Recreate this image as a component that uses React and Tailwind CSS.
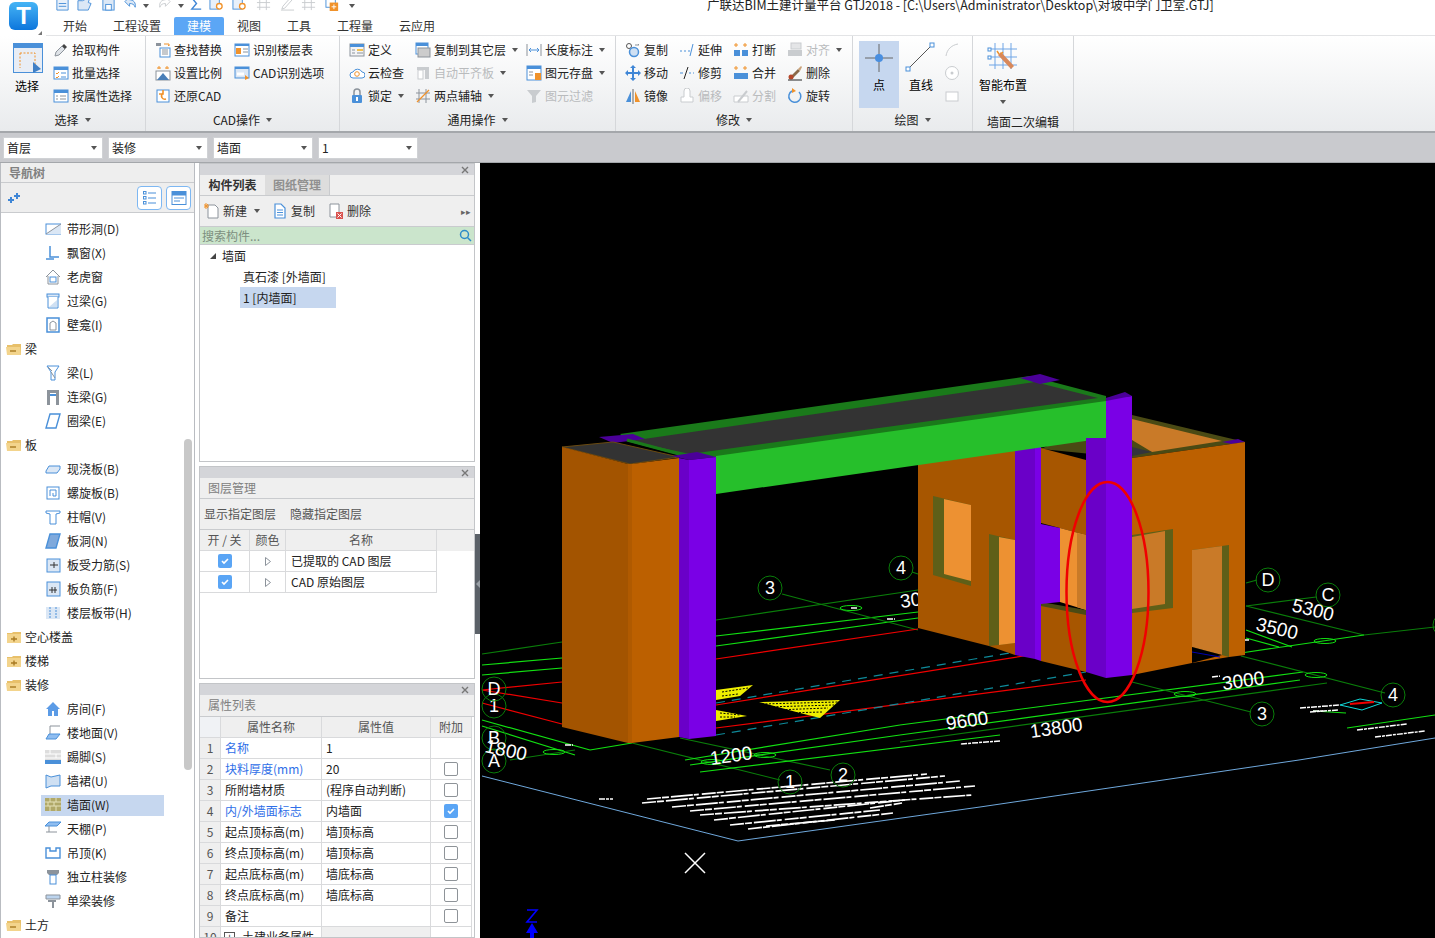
import React from 'react';

const blue = '#4a90d9';
const gray = '#8c939b';
const orange = '#f0922b';
const off = '#c9cccf';

// 16x16 drawings for ribbon and tree entries
const icons = {
  pick: <><path d="M2 14l1-4 6-6 3 3-6 6z" fill="#dfe3e8" stroke={gray} /><path d="M9 4l2-2 3 3-2 2z" fill="#444" /></>,
  batch: <><rect x="1" y="2" width="14" height="12" fill="#fff" stroke={blue} /><rect x="1" y="2" width="14" height="3" fill={blue} /><path d="M3 8l1 1 2-2M3 12l1 1 2-2" stroke={orange} fill="none" /><path d="M8 8h5M8 12h5" stroke={blue} /></>,
  attr: <><rect x="1" y="2" width="14" height="12" fill="#fff" stroke={blue} /><rect x="1" y="2" width="14" height="3" fill={blue} /><path d="M3 8h2M3 11h2M7 8h6M7 11h6" stroke={gray} /></>,
  find: <><rect x="1" y="1" width="5" height="3" fill={gray} /><path d="M9 2h5v2M14 4l-1-1" stroke={orange} fill="none" /><rect x="5" y="6" width="10" height="9" fill="#fff" stroke={blue} /><path d="M7 8h6M7 10h6M7 12h6" stroke={gray} /></>,
  scale: <><path d="M4 1v3M2 3h4M12 1v3M10 3h4" stroke={orange} /><rect x="1" y="6" width="14" height="9" fill="#fff" stroke={gray} /><path d="M2 15l6-7 6 7z" fill="#4a7fb8" /></>,
  restore: <><rect x="2" y="2" width="12" height="12" fill="#fff" stroke={blue} /><path d="M11 11c-4 1-6-3-3-6M8 2v4H4" stroke={orange} strokeWidth="1.6" fill="none" /></>,
  floor: <><rect x="1" y="2" width="14" height="12" fill="#fff" stroke={blue} /><rect x="1" y="2" width="14" height="2" fill={blue} /><rect x="2" y="6" width="5" height="6" fill={orange} /><path d="M9 7h5M9 10h5" stroke={gray} /></>,
  cadopt: <><rect x="1" y="2" width="14" height="11" fill="#dbe7f5" stroke={blue} /><rect x="1" y="2" width="14" height="2" fill={blue} /><path d="M3 9h7" stroke="#fff" strokeWidth="3" /><path d="M11 10l4 3-4 2z" fill={orange} /></>,
  def: <><rect x="1" y="2" width="14" height="12" fill="#f3f4f6" stroke={gray} /><rect x="1" y="2" width="14" height="3" fill={blue} /><rect x="8" y="7" width="6" height="2" fill="#f3c04c" /><path d="M3 8h3M3 11h3M8 11h6" stroke={gray} /></>,
  cloud: <><path d="M4 13a3 3 0 0 1 0-6 5 5 0 0 1 9 0 3 3 0 0 1 0 6z" fill="#fff" stroke={blue} /><circle cx="8" cy="9" r="2.3" fill="none" stroke={orange} /></>,
  lock: <><rect x="3" y="7" width="10" height="8" rx="1" fill={blue} /><path d="M5 7V4a3 3 0 0 1 6 0v3" fill="none" stroke={gray} strokeWidth="1.5" /><rect x="7" y="9" width="2" height="4" fill="#fff" /></>,
  copyfloor: <><rect x="1" y="1" width="12" height="11" fill="#fff" stroke={blue} /><rect x="1" y="1" width="12" height="3" fill={blue} /><rect x="3" y="6" width="12" height="9" fill="#ccc" stroke={gray} /></>,
  align: <><rect x="2" y="2" width="12" height="3" fill={off} /><rect x="3" y="5" width="5" height="9" fill="#fff" stroke={off} /><rect x="10" y="5" width="4" height="9" fill={off} /></>,
  axis: <><path d="M4 1v14M11 1v14M1 5h14M1 11h14" stroke={gray} /><path d="M2 14L14 2" stroke={orange} strokeWidth="1.3" /></>,
  dim: <><path d="M1 2v12M15 2v12" stroke={gray} /><path d="M3 8h10M3 8l2-2M3 8l2 2M13 8l-2-2M13 8l-2 2" stroke={blue} fill="none" /></>,
  store: <><rect x="1" y="1" width="14" height="14" fill="#fff" stroke={blue} /><rect x="1" y="1" width="14" height="3" fill={blue} /><path d="M3 7h4M3 10h4" stroke={gray} /><rect x="9" y="8" width="6" height="7" fill={orange} /></>,
  filter: <path d="M1 2h14l-5 6v6l-4 1V8z" fill={off} />,
  copy: <><circle cx="4" cy="4" r="2.5" fill="#fff" stroke="#555" /><circle cx="9" cy="10" r="4.5" fill="#cfe0f3" stroke={blue} strokeWidth="1.5" /><path d="M10 3h4l-1-1" stroke={gray} fill="none" /></>,
  extend: <><path d="M1 9h2M5 9h2M9 9h2" stroke={blue} /><path d="M14 2l-3 12" stroke={blue} /></>,
  breakit: <><path d="M3 1v4M1 3h4M12 1v4M10 3h4" stroke={orange} /><rect x="1" y="8" width="6" height="6" fill={blue} /><rect x="9" y="8" width="6" height="6" fill={blue} /></>,
  alignit: <><rect x="4" y="1" width="10" height="6" fill="#e4e5e7" stroke={off} /><rect x="1" y="8" width="14" height="6" fill={off} /></>,
  move: <path d="M8 0l3 3H9v4h4V5l3 3-3 3V9H9v4h2l-3 3-3-3h2V9H3v2L0 8l3-3v2h4V3H5z" fill="#3f86d6" />,
  trim: <><path d="M1 8h3M10 8h2M14 8h1" stroke={blue} /><path d="M9 2L5 14" stroke="#222" /></>,
  merge: <><path d="M3 1v4M1 3h4M12 1v4M10 3h4" stroke={orange} /><rect x="1" y="8" width="14" height="6" fill={blue} /></>,
  del: <><path d="M3 12l8-8 2 2-8 8z" fill="#8a6a4a" /><path d="M11 4l3-3 1 1-2 4z" fill="#c9a27a" /><circle cx="4" cy="12" r="2.5" fill="#b5472a" /><path d="M1 15h14" stroke="#222" /></>,
  mirror: <><path d="M1 14L6 3v11z" fill={blue} /><path d="M10 3l5 11h-5z" fill={orange} /><path d="M8 1v15" stroke="#666" /></>,
  offset: <path d="M2 14V9h3V3a3 3 0 0 1 6 0v6h3v5z" fill="#fff" stroke={off} />,
  split: <><path d="M1 8h14v6H1z" fill="#fff" stroke={off} /><path d="M5 14L14 3" stroke={off} strokeWidth="2" /></>,
  rotate: <><path d="M12 4a6 6 0 1 1-7-1" fill="none" stroke={blue} strokeWidth="1.5" /><path d="M5 0l4 3-4 2z" fill={orange} /></>,
  arc: <path d="M2 14C3 7 8 3 14 2" fill="none" stroke={off} />,
  ring: <><circle cx="8" cy="8" r="6.5" fill="#fff" stroke={off} /><circle cx="8" cy="8" r="1.5" fill={off} /></>,
  rect: <rect x="2" y="4" width="12" height="9" fill="#fff" stroke={off} />,
  strip: <><rect x="1" y="3" width="15" height="10" fill="#fff" stroke={blue} /><path d="M1 13h15V3z" fill="#dbe7f5" /><path d="M1 13L16 3" stroke={gray} /></>,
  bay: <path d="M5 1v11h9M1 14h8" fill="none" stroke={blue} strokeWidth="1.5" />,
  dormer: <><path d="M1 8l7-7 7 7M3 7v8h10V7" fill="none" stroke={gray} /><rect x="5" y="8" width="6" height="5" fill="#fff" stroke={blue} /></>,
  lintel: <><rect x="2" y="1" width="12" height="3" fill="#dbe7f5" stroke={blue} /><path d="M3 4v11h10V4" fill="#fff" stroke={blue} /><path d="M4 14l8-7v7z" fill="#cfe0f3" /></>,
  niche: <><rect x="2" y="1" width="12" height="14" fill="#fff" stroke={blue} strokeWidth="1.5" /><path d="M5 13V6l3-2 3 2v7z" fill="#fff" stroke={gray} /></>,
  beam: <><path d="M2 1h12l-4 6v8H6V7z" fill="#fff" stroke={blue} /><path d="M6 7l4 6M3 2l4 4" stroke={gray} /></>,
  link: <><rect x="2" y="1" width="12" height="3" fill={gray} /><rect x="2" y="4" width="3" height="12" fill={gray} /><rect x="11" y="4" width="3" height="12" fill={gray} /><rect x="5" y="5" width="6" height="2" fill={blue} /></>,
  ringbeam: <path d="M5 1h10l-4 14H1z" fill="#fff" stroke={blue} strokeWidth="1.4" />,
  slab: <path d="M1 10l3-5h11v3l-3 4H1z" fill="#dbe7f5" stroke={blue} />,
  spiral: <><rect x="2" y="2" width="12" height="12" fill="#fff" stroke={blue} /><path d="M5 11V5h6v6H8V8" fill="none" stroke={blue} /></>,
  cap: <path d="M1 2h14v2l-4 1v10H5V5L1 4z" fill="#fff" stroke={blue} />,
  hole: <path d="M5 1h10l-4 14H1z" fill="#7fa9dc" stroke={blue} strokeWidth="1.4" />,
  rebar: <><rect x="2" y="2" width="13" height="13" fill="#dbe7f5" stroke={blue} /><path d="M5 8h8M9 5v6" stroke="#333" /></>,
  neg: <><rect x="2" y="1" width="13" height="14" fill="#dbe7f5" stroke={blue} /><path d="M4 9h8M7 6v6M10 6v6" stroke="#333" /></>,
  band: <><rect x="1" y="2" width="14" height="12" fill="#dbe7f5" /><path d="M5 2v12M11 2v12" stroke={blue} strokeDasharray="2 1" /></>,
  room: <path d="M8 1l7 7h-2v7H9v-5H7v5H3V8H1z" fill="#5b9be6" />,
  ground: <><path d="M5 1h10M5 1v8" stroke={gray} fill="none" /><path d="M4 9h11l-4 5H1z" fill="#8fbdf0" stroke={blue} /></>,
  kick: <><rect x="0" y="1" width="16" height="14" fill="#ddd" /><path d="M0 5h16M0 9h16M5 1v4M11 5v4" stroke="#fff" /><rect x="0" y="11" width="16" height="4" fill={blue} /></>,
  skirt: <path d="M1 2l5 2 9-2v11H6l-5 2z" fill="#cfe0f3" stroke={blue} />,
  wall: <><rect x="0" y="1" width="16" height="13" fill="#b0a868" /><path d="M0 5h16M0 9h16M5 1v4M11 1v4M3 5v4M9 5v4M5 9v5M11 9v5" stroke="#e5e1b8" /></>,
  ceiling: <><path d="M4 1h12l-4 4H0z" fill="#8fbdf0" stroke={blue} /><path d="M4 5v6H1M4 11l8 0" stroke={gray} fill="none" /></>,
  hang: <path d="M1 3h4v3h6V3h4v10H1z" fill="#fff" stroke={blue} strokeWidth="1.4" />,
  column: <><path d="M2 1h12v3l-2 2H4L2 4z" fill={gray} /><rect x="5" y="6" width="6" height="9" fill="#fff" stroke={blue} /></>,
  beamdeco: <><path d="M1 2h14v4H1z" fill="#bcd4ee" stroke={gray} /><path d="M3 8h8" stroke={gray} strokeWidth="2" /><rect x="7" y="9" width="2" height="6" fill={gray} /></>,
  newdoc: <><path d="M4 2h7l3 3v10H4z" fill="#fff" stroke={gray} /><path d="M2 0v6M0 3h5M0.5 1l3.5 4M4 1L.5 5" stroke={orange} /></>,
  copydoc: <><path d="M3 1h6l4 4v10H3z" fill="#fff" stroke={blue} strokeWidth="1.2" /><path d="M5 7h6M5 9.5h6M5 12h6" stroke={blue} /></>,
  deldoc: <><path d="M2 1h9v13H2z" fill="#fff" stroke={gray} /><rect x="8" y="9" width="7" height="7" fill="#d9534f" /><path d="M9.5 10.5l4 4M13.5 10.5l-4 4" stroke="#fff" /></>,
  listbtn: <><path d="M6 3h8M6 8h8M6 13h8" stroke={blue} strokeWidth="1.2" /><rect x="1.5" y="1.5" width="2.5" height="2.5" fill="none" stroke={blue} /><rect x="1.5" y="6.5" width="2.5" height="2.5" fill="none" stroke={blue} /><rect x="1.5" y="11.5" width="2.5" height="2.5" fill="none" stroke={blue} /></>,
  winbtn: <><rect x="1" y="1.5" width="14" height="13" fill="#fff" stroke={blue} /><rect x="1" y="1.5" width="14" height="4" fill={blue} /><path d="M3 8h10M3 11h6" stroke={blue} /></>,
  qdoc: <><path d="M2 0h9l3 3v12H2z" fill="#e8f0fa" stroke={blue} /><path d="M4 8h8M4 11h8" stroke={blue} /></>,
  qopen: <path d="M1 15V5h5l8-4-2 6 3 1-3 7z" fill="#dce8f6" stroke={blue} />,
  qsave: <><rect x="2" y="0" width="12" height="15" fill="#dce8f6" stroke={blue} /><rect x="5" y="9" width="6" height="6" fill="#fff" stroke={blue} /></>,
  qundo: <path d="M2 6l5 5V8c3 0 5 1 6 4 1-5-2-8-6-8V1z" fill="#dce8f6" stroke={blue} />,
  qredo: <path d="M14 6l-5 5V8c-3 0-5 1-6 4-1-5 2-8 6-8V1z" fill="#fff" stroke={off} />,
  qsum: <path d="M13 2H3l5 6-5 6h10" fill="none" stroke="#3f86d6" strokeWidth="1.5" />,
  qfind: <><rect x="1" y="0" width="10" height="14" fill="#e8f0fa" stroke={blue} /><circle cx="11" cy="11" r="3" fill="#fff" stroke={orange} strokeWidth="1.4" /></>,
  qgrid: <path d="M1 2h14M1 7h14M1 12h14M4 0v15M11 0v15" stroke={off} />,
  qpen: <path d="M2 14l3-1 8-9-2-2-8 9zM1 15h14" fill="#fff" stroke={off} />,
  qplus: <><rect x="1" y="0" width="10" height="12" fill="#fff" stroke={blue} /><rect x="5" y="7" width="9" height="9" fill={orange} /><path d="M9.5 9v5M7 11.5h5" stroke="#fff" /></>,
};

const Ico = ({ name, size = 16 }) => (
  <svg width={size} height={size} viewBox="0 0 16 16" className="shrink-0">{icons[name]}</svg>
);

const Caret = ({ cls = '' }) => (
  <span className={`inline-block w-0 h-0 border-x-[3.5px] border-x-transparent border-t-[4px] border-t-[#555] ${cls}`} />
);

const Tool = ({ icon, label, w, disabled, caret }) => (
  <div className="h-[23px] flex items-center gap-[3px]" style={{ width: w }}>
    <Ico name={icon} />
    <span className={`whitespace-nowrap ${disabled ? 'text-[#b9bbbd]' : 'text-[#222]'}`}>{label}</span>
    {caret && <Caret cls="ml-[3px]" />}
  </div>
);

const Col = ({ ml, children }) => (
  <div className="flex flex-col" style={{ marginLeft: ml }}>{children}</div>
);

const Group = ({ w, label, caret = true, children }) => (
  <div className="h-full flex flex-col border-r border-[#d5d7da] shrink-0" style={{ width: w }}>
    <div className="h-[71px] mt-[2px] flex">{children}</div>
    <div className={`flex-1 flex items-center justify-center gap-[6px] text-[#222] ${caret ? 'pb-[1px]' : 'pt-[3px]'}`}>
      {label}{caret && <Caret />}
    </div>
  </div>
);

const Select = ({ value }) => (
  <div className="w-[100px] h-[22px] bg-white border border-[#d0d2d5] flex items-center justify-between pl-[3px] pr-[5px] text-[#222]">
    {value}<Caret />
  </div>
);

// quick access bar: [icon, left margin]; the window edge cuts their tops off
const quick = [
  ['qdoc', 0], ['qopen', 7], ['qsave', 9], ['qundo', 7], ['caret', 5], ['qredo', 8], ['caret', 6], ['qsum', 5],
  ['qfind', 5], ['qfind', 8], ['qgrid', 9], ['qpen', 9], ['qgrid', 6], ['qplus', 9], ['caret', 9],
];

const treeRows = [
  ['strip', '带形洞(D)'], ['bay', '飘窗(X)'], ['dormer', '老虎窗'], ['lintel', '过梁(G)'], ['niche', '壁龛(I)'],
  ['-', '梁'], ['beam', '梁(L)'], ['link', '连梁(G)'], ['ringbeam', '圈梁(E)'],
  ['-', '板'], ['slab', '现浇板(B)'], ['spiral', '螺旋板(B)'], ['cap', '柱帽(V)'], ['hole', '板洞(N)'],
  ['rebar', '板受力筋(S)'], ['neg', '板负筋(F)'], ['band', '楼层板带(H)'],
  ['+', '空心楼盖'], ['+', '楼梯'], ['-', '装修'],
  ['room', '房间(F)'], ['ground', '楼地面(V)'], ['kick', '踢脚(S)'], ['skirt', '墙裙(U)'], ['wall', '墙面(W)'],
  ['ceiling', '天棚(P)'], ['hang', '吊顶(K)'], ['column', '独立柱装修'], ['beamdeco', '单梁装修'], ['-', '土方'],
];

const Folder = ({ open }) => (
  <svg width="16" height="13" viewBox="0 0 16 13" className="shrink-0">
    <path d="M1 2h5l1-1h8v11H1z" fill="#e8c06a" />
    <path d={open ? 'M0 4h14l1 8H1z' : 'M1 3h14v9H1z'} fill="#f3d48c" />
    <path d={open ? 'M4 8h6' : 'M5 8h6M8 5.5v5'} stroke="#a87a22" strokeWidth="1.4" />
  </svg>
);

const Check = ({ on }) => (
  on ? (
    <span className="w-[14px] h-[14px] rounded-[2px] bg-[#5aa5f5] flex items-center justify-center">
      <svg width="10" height="10" viewBox="0 0 10 10"><path d="M2 5l2 2 4-4" stroke="#fff" strokeWidth="1.6" fill="none" /></svg>
    </span>
  ) : (
    <span className="w-[14px] h-[14px] rounded-[2px] bg-white border border-[#8e9398]" />
  )
);

const Close = () => (
  <div className="h-[11px] bg-[#d4d5d9] flex items-center justify-end pr-[5px] shrink-0">
    <svg width="8" height="8" viewBox="0 0 8 8"><path d="M1 1l6 6M7 1L1 7" stroke="#777" strokeWidth="1.4" /></svg>
  </div>
);

const PanelHead = ({ label, cls }) => (
  <div className={`bg-[#efefef] border-b border-[#c9cbce] flex items-center pl-[8px] pb-[1px] text-[#808080] shrink-0 ${cls}`}>{label}</div>
);

const propRows = [
  ['名称', '1', true, null],
  ['块料厚度(mm)', '20', true, false],
  ['所附墙材质', '(程序自动判断)', false, false],
  ['内/外墙面标志', '内墙面', true, true],
  ['起点顶标高(m)', '墙顶标高', false, false],
  ['终点顶标高(m)', '墙顶标高', false, false],
  ['起点底标高(m)', '墙底标高', false, false],
  ['终点底标高(m)', '墙底标高', false, false],
  ['备注', '', false, false],
];

const Cell = ({ cls = '', children }) => (
  <div className={`h-[21px] border-r border-b border-[#d9dadc] flex items-center ${cls}`}>{children}</div>
);

// dashes that read as small CAD annotation text
const noise = [
  [647, 799, 927, 774], [642, 803, 945, 776], [672, 807, 960, 781], [690, 811, 975, 786], [700, 815, 972, 795],
  [714, 820, 905, 800], [730, 825, 880, 810], [748, 829, 893, 813], [766, 826, 835, 820], [870, 808, 902, 803],
];

const gridCircle = [
  [770, 588, '3'], [901, 568, '4'], [1268, 580, 'D'], [1328, 595, 'C'], [1393, 695, '4'], [1262, 714, '3'],
  [843, 775, '2'], [790, 782, '1'], [494, 761, 'A'], [494, 738, 'B'], [494, 706, '1'], [494, 689, 'D'], [1445, 625, ''],
];

const dims = [
  ['30', 901, 608, -8], ['5300', 1291, 611, 14], ['3500', 1255, 630, 13], ['3000', 1223, 690, -8],
  ['9600', 947, 730, -8], ['13800', 1031, 738, -8], ['1200', 711, 765, -8], ['1800', 484, 752, 12],
];

const green = [
  [482, 654, 562, 642, 1], [716, 620, 918, 590, 1], [482, 665, 562, 658, 0], [482, 675, 562, 668, 0],
  [716, 636, 918, 612, 0], [716, 646, 918, 618, 0], [900, 725, 1303, 672, 0], [900, 735, 1300, 680, 0],
  [900, 742, 1327, 683, 1], [1246, 583, 1257, 580, 1], [1246, 606, 1316, 597, 1], [1246, 606, 1364, 635, 1],
  [1364, 635, 1435, 627, 1], [1246, 630, 1292, 647, 0], [1246, 638, 1279, 647, 0], [1241, 653, 1364, 635, 0],
  [1241, 656, 1385, 693, 1], [1132, 682, 1251, 712, 1], [782, 594, 918, 630, 1], [912, 572, 918, 574, 1],
  [482, 720, 590, 750, 0], [482, 726, 575, 755, 0], [590, 750, 632, 743, 0], [510, 760, 575, 750, 1],
  [632, 743, 780, 780, 1], [680, 738, 830, 770, 1], [700, 772, 1000, 735, 0], [685, 760, 900, 725, 0], [690, 765, 900, 735, 0],
  [1347, 728, 1435, 715, 0], [1313, 711, 1346, 713, 0],
];

const CadView = () => (
  <svg viewBox="480 163 955 775" className="w-full h-full block bg-black">
    {green.map(([a, b, c, d, dark], i) => (
      <line key={i} x1={a} y1={b} x2={c} y2={d} stroke={dark ? '#0a7d0a' : '#12e012'} strokeWidth="1.2" />
    ))}
    <path d="M482 690L562 682M716 659L918 629M482 690L562 703M482 703L562 724M716 705L1086 646M716 728L1086 680" stroke="#f00000" strokeWidth="1.2" fill="none" />
    <path d="M716 703L1086 640M716 735L1086 672" stroke="#0e8a9a" strokeWidth="1.2" strokeDasharray="9 7" fill="none" />
    <path d="M482 776L738 841L980 807L1299 760L1435 738" stroke="#6fa8dc" fill="none" />
    <path d="M716 690l37-5-13 11-24 4zM716 710l31 6-31 5zM759 702l81-2-20 18-20-5z" fill="#eeee00" />
    <path d="M762 704L838 702M766 707L834 705M775 710L828 708M785 713L822 712M722 692L748 688M722 696L738 694M720 713L740 715M720 717L735 717" stroke="#000" strokeDasharray="2 1.5" />
    {noise.map(([a, b, c, d], i) => (
      <line key={i} x1={a} y1={b} x2={c} y2={d} stroke="#fff" strokeWidth="1.7" strokeDasharray="14 1 7 2 22 1 5 3" />
    ))}
    <path d="M599 799h14M1300 708l40-3M1310 712l28-2M1357 730l50-6M1375 737l50-6M1313 711h10M851 608h6M887 619h8M565 745h8M1212 677l8-1M1243 640h7M1000 741l-40 3" stroke="#fff" strokeWidth="1.5" strokeDasharray="6 1 3 1" />
    <path d="M1340 705l20-6 22 4-20 7z" fill="none" stroke="#12d8d8" />
    <path d="M1350 704l24-2" stroke="#f00000" strokeWidth="2" />
    {[[851, 608], [1325, 641], [1316, 675], [1185, 694], [554, 752], [765, 755], [712, 762]].map(([x, y], i) => (
      <ellipse key={i} cx={x} cy={y} rx="11" ry="2.5" fill="none" stroke="#12e012" />
    ))}
    {gridCircle.map(([x, y, t], i) => (
      <g key={i}>
        <circle cx={x} cy={y} r="12" fill="none" stroke="#0a7d0a" />
        <text x={x} y={y + 6} textAnchor="middle" fontSize="18" fill="#fff" fontFamily="Liberation Sans, sans-serif">{t}</text>
      </g>
    ))}
    {dims.map(([t, x, y, r], i) => (
      <text key={i} x={x} y={y} fontSize="19" fill="#fff" fontFamily="Liberation Sans, sans-serif" transform={`rotate(${r} ${x} ${y})`}>{t}</text>
    ))}
    <path d="M685 853l20 20M705 853l-20 20" stroke="#fff" strokeWidth="1.5" />
    <path d="M527 910h10l-10 12h10" stroke="#0000ff" strokeWidth="1.6" fill="none" />
    <path d="M532 923l6 10h-4v5h-4v-5h-4z" fill="#0000ff" />

    {/* back building */}
    <polygon points="918,460 1015,445 1015,655 989,646 918,628" fill="#a75600" />
    <polygon points="933,496 971,505 971,586 933,575" fill="#5f5f18" />
    <polygon points="944,499 971,505 971,581 944,574" fill="#ed9132" />
    <polygon points="989,534 1015,540 1015,643 989,646" fill="#5f5f18" />
    <polygon points="999,537 1015,540 1015,643 999,645" fill="#ed9132" />
    <polygon points="1132,415 1245,442 1132,458 1041,449 1060,440" fill="#4a4a14" />
    <polygon points="1132,419 1222,441 1152,452 1132,440" fill="#c97a28" />
    <polygon points="1132,447 1152,452 1132,456" fill="#33343c" />
    <polygon points="1222,442 1238,439 1245,442 1232,444" fill="#4b0099" />
    <polygon points="1041,448 1086,460 1086,535 1041,523" fill="#a75600" />
    <polygon points="1060,528 1086,535 1086,610 1060,602" fill="#ed9132" />
    <polygon points="1077,533 1086,535 1086,610 1077,607" fill="#c97a28" />
    <polygon points="1041,604 1086,613 1086,672 1041,661" fill="#a75600" />
    <polygon points="1041,602 1086,610 1086,615 1041,606" fill="#4a4a14" />
    <polygon points="1041,524 1060,528 1060,602 1041,604" fill="#7a00e6" />
    <polygon points="1132,458 1245,442 1245,655 1229,657 1192,663 1132,675" fill="#bc6000" />
    <polygon points="1132,535 1173,529 1173,608 1132,613" fill="#5f5f18" />
    <polygon points="1132,537 1165,531 1165,604 1132,609" fill="#c97a28" />
    <polygon points="1192,550 1229,545 1229,657 1192,647" fill="#5f5f18" />
    <polygon points="1192,550 1222,546 1222,655 1192,647" fill="#c97a28" />
    <polygon points="1192,647 1222,655 1192,663" fill="#000" />
    <line x1="1192" y1="652" x2="1220" y2="657" stroke="#0000b0" />
    {/* mid column */}
    <polygon points="1015,445 1035,445 1035,659 1015,655" fill="#6a00c8" />
    <polygon points="1035,445 1041,445 1041,661 1035,659" fill="#7a00e6" />
    {/* beam */}
    <polygon points="620,434 1030,376 1106,396 1106,403 716,457 690,458 630,442" fill="#1a7a1a" />
    <polygon points="630,441 1035,382 1098,398 690,454" fill="#333333" />
    <polygon points="716,456 1106,401 1106,438 716,494" fill="#26bf2b" />
    <polygon points="1020,378 1040,374 1060,380 1040,384" fill="#4b0099" />
    {/* near column */}
    <polygon points="1086,438 1106,438 1106,678 1086,672" fill="#6a00c8" />
    <polygon points="1106,398 1132,396 1132,675 1106,678" fill="#7a00e6" />
    <polygon points="1106,398 1125,392 1132,396 1106,401" fill="#4b0099" />
    {/* left block */}
    <polygon points="599,437 633,434 645,439 613,443" fill="#4b0099" />
    <polygon points="562,447 613,442 679,457 630,464" fill="#333333" stroke="#6a4a10" />
    <line x1="627" y1="440" x2="683" y2="455" stroke="#1a7a1a" strokeWidth="3" />
    <polygon points="562,447 628,464 628,743 562,727" fill="#a35400" />
    <polygon points="628,464 632,464 632,743 628,743" fill="#b05a00" />
    <polygon points="632,464 679,458 679,737 632,743" fill="#bc6000" />
    {/* left column */}
    <polygon points="672,456 697,452 716,457 689,460" fill="#4b0099" />
    <polygon points="679,458 689,460 689,739 679,737" fill="#6a00c8" />
    <polygon points="689,460 716,457 716,736 689,739" fill="#7a00e6" />
    <ellipse cx="1107.5" cy="592" rx="41" ry="110" fill="none" stroke="#f00000" strokeWidth="2.5" />
  </svg>
);

export default function App() {
  return (
    <div className="w-[1435px] h-[938px] overflow-hidden bg-white flex flex-col text-[12px] leading-none font-['Noto_Sans_CJK_SC','Noto_Sans',sans-serif]">
      {/* Title area */}
      <div className="h-[36px] flex shrink-0">
        <div className="w-[46px] pl-[9px] pt-[2px] shrink-0 flex items-start">
          <div className="w-[29px] h-[28px] rounded-[6px] bg-gradient-to-b from-[#45b4f5] to-[#0b76dc] flex items-center justify-center text-white text-[24px] font-bold font-['Liberation_Sans',sans-serif]">T</div>
          <svg width="4" height="4" viewBox="0 0 4 4" className="mt-[29px]"><path d="M4 0v4H0z" fill="#777" /></svg>
        </div>
        <div className="flex-1 flex flex-col">
          <div className="h-[17px] flex overflow-hidden shrink-0">
            <div className="w-[661px] h-[11px] overflow-hidden flex items-end pl-[9px] shrink-0">
              {quick.map(([n, ml], i) => (
                <span key={i} className="flex items-end" style={{ marginLeft: ml }}>
                  {n === 'caret' ? <Caret cls="mb-[3px]" /> : <Ico name={n} size={15} />}
                </span>
              ))}
            </div>
            <div className="-mt-[3px] text-[12.5px] leading-[15px] text-[#222] whitespace-nowrap">广联达BIM土建计量平台 GTJ2018 - [C:\Users\Administrator\Desktop\对坡中学门卫室.GTJ]</div>
          </div>
          <div className="h-[19px] flex items-stretch text-[#333] border-b border-[#e3e4e6]">
            <span className="ml-[17px] w-[24px] flex items-center">开始</span>
            <span className="ml-[26px] w-[48px] flex items-center">工程设置</span>
            <span className="ml-[13px] w-[50px] flex items-center justify-center bg-[#5ba6f5] text-white rounded-t-[2px]">建模</span>
            <span className="ml-[13px] w-[24px] flex items-center">视图</span>
            <span className="ml-[26px] w-[24px] flex items-center">工具</span>
            <span className="ml-[26px] w-[36px] flex items-center">工程量</span>
            <span className="ml-[26px] w-[36px] flex items-center">云应用</span>
          </div>
        </div>
      </div>

      {/* Ribbon */}
      <div className="h-[97px] flex shrink-0 bg-gradient-to-b from-white to-[#e9ebed] border-b-2 border-[#a4a7ab]">
        <Group w={146} label="选择">
          <div className="w-[53px] pl-[13px] flex flex-col">
            <svg width="30" height="30" viewBox="0 0 30 30" className="mt-[5px]">
              <rect x=".5" y=".5" width="29" height="29" fill="#e8edf5" stroke={blue} />
              <rect x="0" y="0" width="30" height="5" fill={blue} />
              <path d="M7 10h15v13" fill="none" stroke={orange} strokeDasharray="2 1.5" />
              <path d="M7 10v15" stroke={orange} strokeDasharray="2 1.5" />
              <path d="M20 19l8 7-8 4z" fill="#3f7fc6" />
            </svg>
            <span className="mt-[7px] ml-[2px]">选择</span>
          </div>
          <Col>
            <Tool icon="pick" label="拾取构件" />
            <Tool icon="batch" label="批量选择" />
            <Tool icon="attr" label="按属性选择" />
          </Col>
        </Group>
        <Group w={194} label="CAD操作">
          <Col ml={9}>
            <Tool icon="find" label="查找替换" w={79} />
            <Tool icon="scale" label="设置比例" w={79} />
            <Tool icon="restore" label="还原CAD" w={79} />
          </Col>
          <Col>
            <Tool icon="floor" label="识别楼层表" />
            <Tool icon="cadopt" label="CAD识别选项" />
          </Col>
        </Group>
        <Group w={276} label="通用操作">
          <Col ml={9}>
            <Tool icon="def" label="定义" w={66} />
            <Tool icon="cloud" label="云检查" w={66} />
            <Tool icon="lock" label="锁定" caret w={66} />
          </Col>
          <Col>
            <Tool icon="copyfloor" label="复制到其它层" caret w={111} />
            <Tool icon="align" label="自动平齐板" disabled caret w={111} />
            <Tool icon="axis" label="两点辅轴" caret w={111} />
          </Col>
          <Col>
            <Tool icon="dim" label="长度标注" caret />
            <Tool icon="store" label="图元存盘" caret />
            <Tool icon="filter" label="图元过滤" disabled />
          </Col>
        </Group>
        <Group w={237} label="修改">
          <Col ml={9}>
            <Tool icon="copy" label="复制" w={54} />
            <Tool icon="move" label="移动" w={54} />
            <Tool icon="mirror" label="镜像" w={54} />
          </Col>
          <Col>
            <Tool icon="extend" label="延伸" w={54} />
            <Tool icon="trim" label="修剪" w={54} />
            <Tool icon="offset" label="偏移" disabled w={54} />
          </Col>
          <Col>
            <Tool icon="breakit" label="打断" w={54} />
            <Tool icon="merge" label="合并" w={54} />
            <Tool icon="split" label="分割" disabled w={54} />
          </Col>
          <Col>
            <Tool icon="alignit" label="对齐" disabled caret />
            <Tool icon="del" label="删除" />
            <Tool icon="rotate" label="旋转" />
          </Col>
        </Group>
        <Group w={120} label="绘图">
          <div className="ml-[6px] w-[40px] h-[67px] mt-[3px] bg-[#c6d7ef] flex flex-col items-center">
            <svg width="30" height="30" viewBox="0 0 30 30" className="mt-[2px]">
              <path d="M15 1v28M1 15h28" stroke="#666" />
              <circle cx="15" cy="15" r="4" fill="#4a8fe0" />
            </svg>
            <span className="mt-[6px]">点</span>
          </div>
          <div className="ml-[6px] w-[39px] flex flex-col">
            <svg width="30" height="30" viewBox="0 0 30 30" className="mt-[4px]">
              <path d="M3 27L27 3" stroke="#555" />
              <rect x="1" y="25" width="4" height="4" fill="#fff" stroke={blue} />
              <rect x="25" y="1" width="4" height="4" fill="#fff" stroke={blue} />
            </svg>
            <span className="mt-[7px] ml-[4px]">直线</span>
          </div>
          <Col>
            <Tool icon="arc" label="" />
            <Tool icon="ring" label="" />
            <Tool icon="rect" label="" />
          </Col>
        </Group>
        <Group w={101} label="墙面二次编辑" caret={false}>
          <div className="pl-[6px] flex flex-col">
            <svg width="32" height="30" viewBox="0 0 32 30" className="ml-[8px] mt-[4px]">
              <path d="M8 1v26M16 1v26M24 1v26M2 7h28M2 15h28M2 23h28" stroke="#6ea5e6" />
              <rect x="1" y="6" width="3" height="3" fill="#fff" stroke={blue} />
              <rect x="1" y="14" width="3" height="3" fill="#fff" stroke={blue} />
              <path d="M11 13l13 14 3-3-13-14z" fill="#d8885a" />
              <path d="M10 9l2 3M16 10l-2 2" stroke={orange} strokeWidth="1.5" />
            </svg>
            <span className="mt-[7px] whitespace-nowrap">智能布置</span>
            <Caret cls="mt-[9px] ml-[21px]" />
          </div>
        </Group>
      </div>

      {/* Layer selectors */}
      <div className="h-[30px] bg-[#c9cace] flex items-center pl-[3px] gap-[5px] shrink-0 pt-[1px] border-b border-[#a4a7ab]">
        <Select value="首层" />
        <Select value="装修" />
        <Select value="墙面" />
        <Select value="1" />
      </div>

      {/* Workspace */}
      <div className="flex-1 flex min-h-0">
        {/* Navigation tree */}
        <div className="relative w-[195px] shrink-0 border-l border-r border-[#b9bcc1] flex flex-col overflow-hidden">
          <div className="h-[20px] bg-[#eeeeee] border-b border-[#c9cbce] flex items-center pl-[8px] text-[#808080] font-semibold shrink-0">导航树</div>
          <div className="h-[30px] bg-[#eeeeee] border-b border-[#c9cbce] flex items-center justify-between pl-[6px] pr-[3px] shrink-0">
            <svg width="14" height="12" viewBox="0 0 14 12"><path d="M4 5v6M1 8h6M10 1v6M7 4h6" stroke="#3f86d6" strokeWidth="2" /></svg>
            <div className="flex gap-[4px]">
              <span className="w-[25px] h-[24px] bg-white border border-[#7db7f2] rounded-[4px] flex items-center justify-center"><Ico name="listbtn" /></span>
              <span className="w-[25px] h-[24px] bg-white border border-[#7db7f2] rounded-[4px] flex items-center justify-center"><Ico name="winbtn" /></span>
            </div>
          </div>
          <div className="pt-[4px] flex flex-col">
            {treeRows.map(([icon, label]) => (
              icon === '-' || icon === '+' ? (
                <div key={label} className="h-[24px] shrink-0 flex items-center gap-[3px] pl-[5px] text-[#222]">
                  <Folder open={icon === '-'} />{label}
                </div>
              ) : (
                <div key={label} className="h-[24px] shrink-0 flex items-center pl-[40px]">
                  <div className={`w-[123px] h-[21px] flex items-center gap-[6px] pl-[4px] text-[#222] ${label === '墙面(W)' ? 'bg-[#c6d7ef]' : ''}`}>
                    <Ico name={icon} />{label}
                  </div>
                </div>
              )
            ))}
          </div>
          <div className="absolute left-[183px] top-[276px] w-[8px] h-[331px] rounded-[4px] bg-[#c8c8c8]" />
        </div>

        <div className="w-[4px] shrink-0" />

        {/* Middle column */}
        <div className="w-[276px] shrink-0 flex flex-col gap-[4px]">
          <div className="h-[299px] border border-[#c3c5c8] flex flex-col shrink-0">
            <Close />
            <div className="h-[21px] bg-[#efefef] flex border-b border-[#c9cbce] shrink-0">
              <span className="w-[65px] flex items-center justify-center font-semibold text-[#333]">构件列表</span>
              <span className="w-[65px] bg-[#dddddd] flex items-center justify-center font-semibold text-[#909090] border-r border-[#c9cbce]">图纸管理</span>
            </div>
            <div className="h-[31px] bg-[#efefef] border-b border-[#c9cbce] flex items-center pl-[4px] pr-[3px] text-[#333] shrink-0">
              <Ico name="newdoc" /><span className="ml-[3px]">新建</span><Caret cls="ml-[7px]" />
              <span className="ml-[12px]"><Ico name="copydoc" /></span><span className="ml-[3px]">复制</span>
              <span className="ml-[13px]"><Ico name="deldoc" /></span><span className="ml-[3px]">删除</span>
              <span className="ml-auto text-[9px] text-[#666]">▸▸</span>
            </div>
            <div className="h-[18px] bg-[#cbe5cc] flex items-center justify-between px-[2px] text-[#7d8f80] border-b border-[#c9cbce] shrink-0">
              搜索构件...
              <svg width="13" height="13" viewBox="0 0 13 13"><circle cx="5.5" cy="5.5" r="4" fill="none" stroke="#2c8bc9" strokeWidth="1.5" /><path d="M8.5 8.5l3.5 3.5" stroke="#2c8bc9" strokeWidth="1.5" /></svg>
            </div>
            <div className="h-[21px] flex items-center pl-[10px] gap-[6px] text-[#222]">
              <span className="w-0 h-0 border-l-[6px] border-l-transparent border-b-[6px] border-b-[#444]" />墙面
            </div>
            <div className="h-[21px] flex items-center pl-[43px] text-[#222]">真石漆 [外墙面]</div>
            <div className="ml-[40px] w-[96px] h-[21px] bg-[#c6d7ef] flex items-center pl-[3px] text-[#222]">1 [内墙面]</div>
          </div>

          <div className="h-[213px] border border-[#c3c5c8] flex flex-col shrink-0">
            <Close />
            <PanelHead label="图层管理" cls="h-[21px]" />
            <div className="h-[31px] bg-[#efefef] border-b border-[#c9cbce] flex items-center pl-[4px] gap-[14px] text-[#555] shrink-0">
              <span>显示指定图层</span><span>隐藏指定图层</span>
            </div>
            <div className="h-[21px] bg-[#efefef] flex text-[#555] shrink-0">
              <span className="w-[50px] flex items-center justify-center border-r border-b border-[#d9dadc]">开 / 关</span>
              <span className="w-[36px] flex items-center justify-center border-r border-b border-[#d9dadc]">颜色</span>
              <span className="w-[151px] flex items-center justify-center border-r border-b border-[#d9dadc]">名称</span>
            </div>
            {['已提取的 CAD 图层', 'CAD 原始图层'].map((name) => (
              <div key={name} className="flex w-[237px] text-[#222]">
                <Cell cls="w-[50px] justify-center"><Check on /></Cell>
                <Cell cls="w-[36px] justify-center">
                  <svg width="6" height="9" viewBox="0 0 6 9"><path d="M.5.5l5 4-5 4z" fill="#fff" stroke="#8c939b" /></svg>
                </Cell>
                <Cell cls="w-[151px] pl-[5px]">{name}</Cell>
              </div>
            ))}
          </div>

          <div className="flex-1 border border-[#c3c5c8] flex flex-col overflow-hidden">
            <Close />
            <PanelHead label="属性列表" cls="h-[22px]" />
            <div className="grid grid-cols-[21px_101px_109px_41px] w-[272px] text-[#222]">
              <Cell cls="bg-[#f0f2f5]"></Cell>
              <Cell cls="bg-[#efefef] justify-center text-[#555]">属性名称</Cell>
              <Cell cls="bg-[#efefef] justify-center text-[#555]">属性值</Cell>
              <Cell cls="bg-[#efefef] justify-center text-[#555]">附加</Cell>
              {propRows.map(([name, value, link, extra], i) => (
                <React.Fragment key={name}>
                  <Cell cls="bg-[#efefef] justify-center text-[#555]">{i + 1}</Cell>
                  <Cell cls={`pl-[4px] whitespace-nowrap ${link ? 'text-[#2f6fe8]' : ''}`}>{name}</Cell>
                  <Cell cls="pl-[4px] whitespace-nowrap">{value}</Cell>
                  <Cell cls="justify-center">{extra !== null && <Check on={extra} />}</Cell>
                </React.Fragment>
              ))}
              <Cell cls="bg-[#efefef] justify-center text-[#555]">10</Cell>
              <Cell cls="pl-[3px] gap-[7px] whitespace-nowrap">
                <span className="w-[11px] h-[11px] border border-[#555] flex items-center justify-center text-[10px]">+</span>土建业务属性
              </Cell>
              <Cell cls="bg-[#efefef]"></Cell>
              <Cell></Cell>
            </div>
          </div>
        </div>

        {/* Splitter */}
        <div className="w-[5px] shrink-0 flex flex-col">
          <div className="h-[371px] shrink-0" />
          <div className="h-[100px] bg-[#5b6168] flex items-center justify-center">
            <span className="w-0 h-0 border-y-[4px] border-y-transparent border-r-[4px] border-r-[#9aa0a6]" />
          </div>
        </div>

        <div className="flex-1 min-w-0">
          <CadView />
        </div>
      </div>
    </div>
  );
}
